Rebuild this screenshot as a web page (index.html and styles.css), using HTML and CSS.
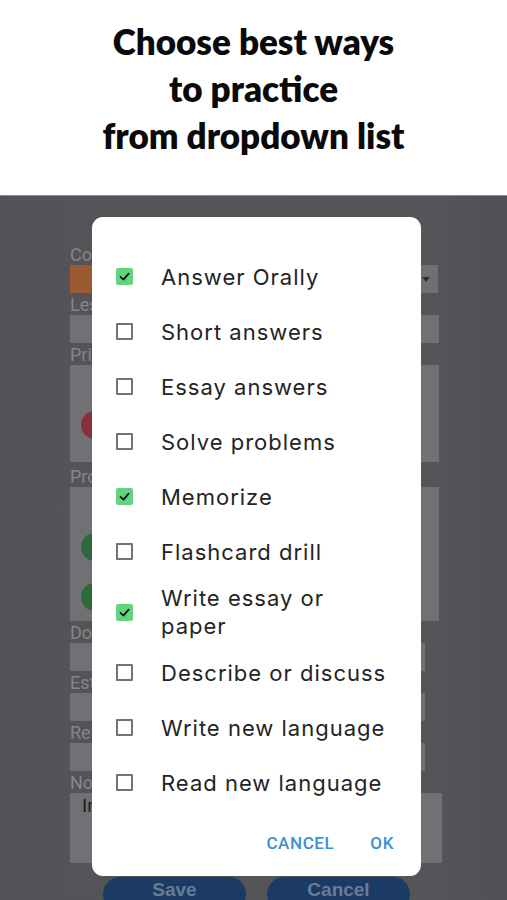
FILE: index.html
```html
<!DOCTYPE html>
<html>
<head>
<meta charset="utf-8">
<link rel="stylesheet" href="styles.css">
</head>
<body>
<header class="banner">
  <h1 class="title">Choose best ways<br>to practice<br>from dropdown list</h1>
</header>
<main class="screen">
  <form class="form">
    <div class="label">Course</div>
    <div class="field select"><span class="caret"></span></div>
    <div class="label">Lesson</div>
    <div class="field"></div>
    <div class="label">Priority</div>
    <div class="box box-a"><span class="dot red"></span></div>
    <div class="label l-gap">Progress</div>
    <div class="box box-b"><span class="dot green"></span><span class="dot green"></span></div>
    <div class="label">Done</div>
    <div class="field short"></div>
    <div class="label">Estimate</div>
    <div class="field short"></div>
    <div class="label">Remind</div>
    <div class="field short"></div>
    <div class="label">Notes</div>
    <div class="notes">In</div>
    <div class="actions">
      <span class="pill">Save</span>
      <span class="pill">Cancel</span>
    </div>
  </form>

  <div class="dialog">
    <ul class="options">
      <li class="opt"><span class="cb on"><svg viewBox="0 0 17 17"><polyline points="4.5,8.8 7.5,11.6 12.6,5.6"/></svg></span><span class="opt-text">Answer Orally</span></li>
      <li class="opt"><span class="cb"></span><span class="opt-text">Short answers</span></li>
      <li class="opt"><span class="cb"></span><span class="opt-text">Essay answers</span></li>
      <li class="opt"><span class="cb"></span><span class="opt-text">Solve problems</span></li>
      <li class="opt"><span class="cb on"><svg viewBox="0 0 17 17"><polyline points="4.5,8.8 7.5,11.6 12.6,5.6"/></svg></span><span class="opt-text">Memorize</span></li>
      <li class="opt"><span class="cb"></span><span class="opt-text">Flashcard drill</span></li>
      <li class="opt"><span class="cb on"><svg viewBox="0 0 17 17"><polyline points="4.5,8.8 7.5,11.6 12.6,5.6"/></svg></span><span class="opt-text">Write essay or<br>paper</span></li>
      <li class="opt"><span class="cb"></span><span class="opt-text">Describe or discuss</span></li>
      <li class="opt"><span class="cb"></span><span class="opt-text">Write new language</span></li>
      <li class="opt"><span class="cb"></span><span class="opt-text">Read new language</span></li>
    </ul>
    <div class="dlg-actions">
      <span class="dlg-btn">CANCEL</span>
      <span class="dlg-btn">OK</span>
    </div>
  </div>
</main>
</body>
</html>
```
FILE: styles.css
```css
* { box-sizing: border-box; }
html, body { margin: 0; padding: 0; }
body {
  width: 507px;
  height: 900px;
  overflow: hidden;
  background: #545358;
  font-family: Roboto, "Noto Sans", sans-serif;
}
.banner {
  height: 196px;
  background: #fff;
  padding-top: 18px;
  border-bottom: 1px solid #8d8d8f;
}
.title {
  margin: 0;
  text-align: center;
  font-family: Lato, "Liberation Sans", sans-serif;
  font-weight: 800;
  font-size: 35px;
  line-height: 47px;
  color: #0a0a0a;
}
.screen {
  position: relative;
  height: 704px;
  overflow: hidden;
  background: linear-gradient(to right, #545358 0, #555459 440px, #504f54 507px);
}
.form {
  padding: 47px 0 0 70px;
  width: 442px;
}
.label {
  height: 22px;
  font-size: 18px;
  line-height: 22px;
  color: #86858a;
  padding-top: 1px;
}
.l-gap { margin-top: 3px; }
.field {
  height: 28px;
  width: 369px;
  background: #717074;
}
.field.short { width: 355px; }
.select {
  width: 368px;
  background: linear-gradient(to right, #9c5a34 0, #9c5a34 30px, #707073 30px);
  position: relative;
}
.caret {
  position: absolute;
  right: 8px;
  top: 12px;
  border-left: 4px solid transparent;
  border-right: 4px solid transparent;
  border-top: 5px solid #2e2e30;
}
.box {
  width: 369px;
  background: #717074;
  padding: 46px 0 0 11px;
}
.box-a { height: 97px; }
.box-b { height: 134px; }
.dot {
  display: block;
  width: 28px;
  height: 28px;
  border-radius: 50%;
}
.red { background: #85303a; }
.green { background: #2f6a3c; margin-bottom: 22px; }
.notes {
  height: 70px;
  width: 372px;
  background: #717074;
  color: #1c1c1c;
  font-size: 19px;
  padding: 1px 0 0 12px;
}
.actions {
  display: flex;
  gap: 21px;
  margin: 14px 0 0 33px;
}
.pill {
  width: 143px;
  height: 34px;
  border-radius: 17px;
  background: #1b3b64;
  color: #687c97;
  text-align: center;
  font-family: "Liberation Sans", sans-serif;
  font-weight: 700;
  font-size: 19px;
  line-height: 26px;
}
.dialog {
  position: absolute;
  left: 92px;
  top: 21px;
  width: 329px;
  height: 659px;
  background: #fff;
  border-radius: 11px;
  display: flex;
  flex-direction: column;
}
.options {
  list-style: none;
  margin: 0;
  padding: 32px 0 0 0;
}
.opt {
  display: flex;
  align-items: center;
  min-height: 55px;
  padding: 5px 0;
}
.cb {
  flex: none;
  width: 17px;
  height: 17px;
  margin-left: 24px;
  margin-right: 28px;
  border: 2px solid #737373;
  border-radius: 1px;
  background: #fff;
}
.cb.on {
  border: none;
  background: #62d480;
  border-radius: 2px;
}
.cb svg {
  display: block;
  width: 17px;
  height: 17px;
}
.cb polyline {
  fill: none;
  stroke: #111;
  stroke-width: 1.8;
  stroke-linecap: round;
  stroke-linejoin: round;
}
.opt-text {
  font-family: Inter, Roboto, sans-serif;
  font-size: 22px;
  letter-spacing: 1px;
  line-height: 28px;
  color: #242424;
}
.dlg-actions {
  flex: 1;
  display: flex;
  justify-content: flex-end;
  align-items: center;
  gap: 36px;
  padding-right: 27px;
}
.dlg-btn {
  font-size: 17px;
  font-weight: 500;
  letter-spacing: 0.6px;
  color: #3b8fd2;
}
```
